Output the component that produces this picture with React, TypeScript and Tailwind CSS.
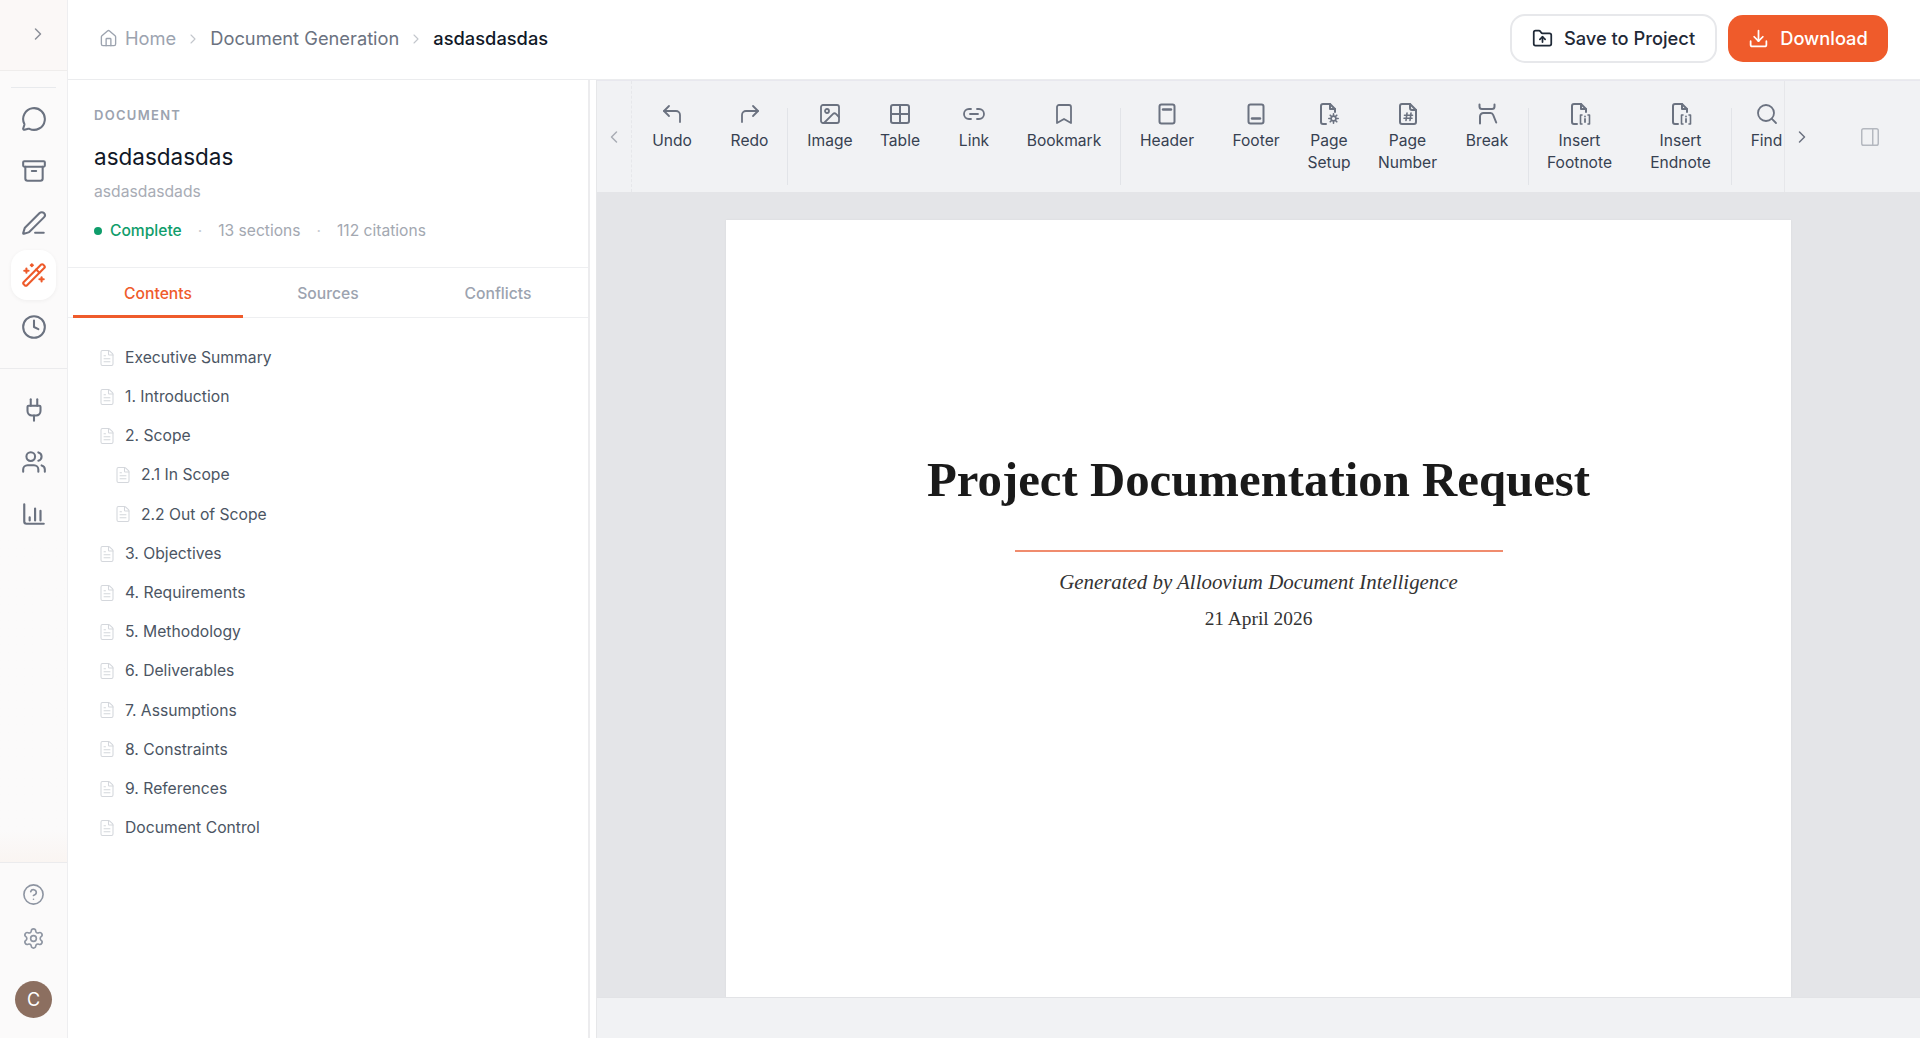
import React from "react";
import {
  ChevronRight, ChevronLeft, Home, MessageCircle, Archive, PenLine, WandSparkles, Clock, Plug, Users,
  CircleHelp, Settings, FolderUp, Download, CornerUpLeft, CornerUpRight, Image, Link2, Bookmark, Search, FileText, PanelRight,
} from "lucide-react";

const base = { fill: "none", stroke: "currentColor", strokeWidth: 2, strokeLinecap: "round", strokeLinejoin: "round" } as const;

function Svg({ children, size = 24 }: { children: React.ReactNode; size?: number }) {
  return <svg width={size} height={size} viewBox="0 0 24 24" {...base}>{children}</svg>;
}
const TableIcon = () => <Svg><rect x="3" y="3" width="18" height="18" rx="2" /><path d="M3 12h18M12 3v18" /></Svg>;
const HeaderIcon = () => <Svg><rect x="4.5" y="2.5" width="15" height="19" rx="2" /><path d="M8 7.5h8" strokeWidth="2.4" /></Svg>;
const FooterIcon = () => <Svg><rect x="4.5" y="2.5" width="15" height="19" rx="2" /><path d="M8 16.5h8" strokeWidth="2.4" /></Svg>;
const PageSetupIcon = () => (
  <Svg>
    <path d="M9 22H6a2 2 0 0 1-2-2V4a2 2 0 0 1 2-2h7l5 5v3" />
    <path d="M13 2v5h5" />
    <circle cx="16.5" cy="16.5" r="2.4" strokeWidth="1.6" />
    <path d="M16.5 11.8v1.6M16.5 19.6v1.6M11.8 16.5h1.6M19.6 16.5h1.6M13.2 13.2l1.1 1.1M18.7 18.7l1.1 1.1M13.2 19.8l1.1-1.1M18.7 14.3l1.1-1.1" strokeWidth="1.6" />
  </Svg>
);
const PageNumberIcon = () => (
  <Svg>
    <path d="M14 2H6a2 2 0 0 0-2 2v16a2 2 0 0 0 2 2h12a2 2 0 0 0 2-2V8z" />
    <path d="M14 2v4a2 2 0 0 0 2 2h4" />
    <path d="M11 11l-1 7.5M15 11l-1 7.5M8.5 13.2h8M8 16.3h8" strokeWidth="1.6" />
  </Svg>
);
const BreakIcon = () => (
  <Svg>
    <path d="M4.5 2.5v2a2.5 2.5 0 0 0 2.5 2.5h10a2.5 2.5 0 0 0 2.5-2.5v-2" />
    <path d="M5 21.5v-7a3.5 3.5 0 0 1 3.5-3.5h7c1.3 0 2.2.7 2.7 2l3 7.5" />
  </Svg>
);
const NoteIcon = () => (
  <Svg>
    <path d="M9 22H6a2 2 0 0 1-2-2V4a2 2 0 0 1 2-2h7l5 5v3" />
    <path d="M13 2v5h5" />
    <path d="M14 13h-1.5v9H14M20 13h1.5v9H20" strokeWidth="1.6" />
    <path d="M17 17v3M17 14.5v.1" strokeWidth="1.8" />
  </Svg>
);
const ChartIcon = () => (
  <Svg size={26}>
    <path d="M3 3v16a2 2 0 0 0 2 2h16" />
    <path d="M8 18v-3M13 18V7M18 18V9" />
  </Svg>
);

function SideItem({ children, active }: { children: React.ReactNode; active?: boolean }) {
  return (
    <div className="h-[52px] flex items-center justify-center">
      <div className={active
        ? "w-[45px] h-[50px] rounded-2xl bg-white shadow-[0_1px_4px_rgba(0,0,0,0.05)] flex items-center justify-center text-[#ee5a2a]"
        : "w-[45px] h-[50px] flex items-center justify-center text-[#6b7280]"}>
        {children}
      </div>
    </div>
  );
}

function Tool({ w, icon, label, line2 }: { w: string; icon: React.ReactNode; label: string; line2?: string }) {
  return (
    <div className={`${w} shrink-0 flex flex-col items-center pt-[21px]`}>
      <div className="h-6 flex items-center justify-center text-[#6b7280]">{icon}</div>
      <div className="mt-[4px] text-[15.6px] leading-[22px] text-[#374151] text-center whitespace-nowrap">
        {label}
        {line2 && <br />}
        {line2}
      </div>
    </div>
  );
}

const Sep = () => <div className="w-px h-[77px] mt-[27px] shrink-0 bg-[#e2e4e8]" />;

const toc: [string, boolean][] = [
  ["Executive Summary", false], ["1. Introduction", false], ["2. Scope", false], ["2.1 In Scope", true], ["2.2 Out of Scope", true],
  ["3. Objectives", false], ["4. Requirements", false], ["5. Methodology", false], ["6. Deliverables", false], ["7. Assumptions", false],
  ["8. Constraints", false], ["9. References", false], ["Document Control", false],
];

export default function App() {
  return (
    <div className="h-screen w-full flex overflow-hidden bg-white [font-family:Inter,sans-serif]">
      <aside className="w-[68px] shrink-0 flex flex-col bg-[#fbfafa] border-r border-[#eeeef0]">
        <div className="h-[71px] shrink-0 flex items-center justify-end pr-[19px] pb-[2px] bg-[#fbf8f7] border-b border-[#efedec] text-[#8b8f98]">
          <ChevronRight size={20} strokeWidth={1.8} />
        </div>
        <div className="mx-[11px] mt-[16px] h-px bg-[#e8eaed]" />
        <div className="mt-[5px]">
          <SideItem><MessageCircle size={26} strokeWidth={1.9} /></SideItem>
          <SideItem><Archive size={26} strokeWidth={1.9} /></SideItem>
          <SideItem><PenLine size={26} strokeWidth={1.9} /></SideItem>
          <SideItem active><WandSparkles size={26} strokeWidth={1.9} /></SideItem>
          <SideItem><Clock size={26} strokeWidth={1.9} /></SideItem>
        </div>
        <div className="mt-[15px] h-px bg-[#ebebed]" />
        <div className="mt-[15px]">
          <SideItem><Plug size={26} strokeWidth={1.9} /></SideItem>
          <SideItem><Users size={26} strokeWidth={1.9} /></SideItem>
          <SideItem><ChartIcon /></SideItem>
        </div>
        <div className="flex-1 bg-gradient-to-b from-[#fbfafa] from-90% to-[#faf5f2]" />
        <div className="h-px bg-[#ebebed]" />
        <div className="h-[175px] shrink-0 flex flex-col items-center text-[#8e95a2]">
          <div className="mt-[19px] h-[24px] flex items-center"><CircleHelp size={23} strokeWidth={1.7} /></div>
          <div className="mt-[20px] h-[24px] flex items-center"><Settings size={23} strokeWidth={1.7} /></div>
          <div className="mt-[31px] w-[37px] h-[37px] rounded-full bg-[#8c6f60] flex items-center justify-center text-white text-[18px]">C</div>
        </div>
      </aside>

      <div className="flex-1 min-w-0 flex flex-col">
        <header className="h-[80px] shrink-0 flex items-center justify-between pl-[31px] pr-[32px] pb-[2px] border-b border-[#ebecee]">
          <nav className="flex items-center text-[18.3px]">
            <Home size={19} strokeWidth={1.7} className="text-[#9ca3af]" />
            <span className="ml-[7px] text-[#9ca3af]">Home</span>
            <ChevronRight size={16} strokeWidth={1.6} className="mx-[9px] text-[#c2c6cc]" />
            <span className="text-[#6b7280]">Document Generation</span>
            <ChevronRight size={16} strokeWidth={1.6} className="mx-[9px] text-[#c2c6cc]" />
            <span className="text-[#111827] font-medium">asdasdasdas</span>
          </nav>
          <div className="flex items-center gap-[11px]">
            <button className="w-[207px] h-[49px] rounded-[15px] border-2 border-[#e7e8eb] bg-white flex items-center justify-center gap-[11px] text-[18.3px] font-medium text-[#1f2937]">
              <FolderUp size={21} strokeWidth={2} />Save to Project
            </button>
            <button className="w-[160px] h-[47px] rounded-[15px] bg-[#ef5b2b] flex items-center justify-center gap-[11px] text-[18.3px] font-medium text-white">
              <Download size={21} strokeWidth={2} />Download
            </button>
          </div>
        </header>

        <div className="flex-1 min-h-0 flex">
          <section className="w-[522px] shrink-0 flex flex-col border-r-2 border-[#ececee]">
            <div className="h-[188px] shrink-0 pl-[26px] border-b border-[#eeeff1]">
              <div className="pt-[27px] text-[13px] leading-4 font-semibold tracking-[0.1em] text-[#9ca3af]">DOCUMENT</div>
              <div className="mt-[19px] text-[22.5px] leading-[30px] text-[#111827]">asdasdasdas</div>
              <div className="mt-[10px] text-[15.7px] leading-5 text-[#a8acb5]">asdasdasdads</div>
              <div className="mt-[19px] flex items-center text-[15.6px] leading-5">
                <span className="w-2 h-2 rounded-full bg-[#0f9d6b]" />
                <span className="ml-[8px] font-medium text-[#0f9d6b]">Complete</span>
                <span className="ml-[16px] text-[#c8ccd2]">·</span>
                <span className="ml-[16px] text-[#a3a8b1]">13 sections</span>
                <span className="ml-[16px] text-[#c8ccd2]">·</span>
                <span className="ml-[16px] text-[#a3a8b1]">112 citations</span>
              </div>
            </div>
            <div className="h-[50px] shrink-0 pl-[5px] flex border-b border-[#eeeff1] text-[15.7px] font-medium">
              <div className="w-[170px] h-[50px] pt-[4px] flex items-center justify-center text-[#ef5b2b] border-b-[3px] border-[#ef5b2b]">Contents</div>
              <div className="w-[170px] pt-[3px] flex items-center justify-center text-[#9ca3af]">Sources</div>
              <div className="w-[170px] pt-[3px] flex items-center justify-center text-[#9ca3af]">Conflicts</div>
            </div>
            <div className="pt-[20px]">
              {toc.map(([t, sub]) => (
                <div key={t} className={sub ? "h-[39.2px] flex items-center pl-[46px]" : "h-[39.2px] flex items-center pl-[30px]"}>
                  <FileText size={18} strokeWidth={1.4} className="text-[#d4d7dc]" />
                  <span className="ml-[9px] text-[15.7px] text-[#4b5563]">{t}</span>
                </div>
              ))}
            </div>
          </section>

          <main className="flex-1 min-w-0 ml-[6px] flex flex-col bg-[#e4e5e8] border-l border-[#e6e7e9]">
            <div className="h-[112px] shrink-0 flex bg-[#f1f2f4] border-t border-[#e8e8ee]">
              <div className="w-[35px] shrink-0 flex items-center justify-center border-r border-dashed border-[#e6e7ea] text-[#a9adb5]">
                <ChevronLeft size={20} strokeWidth={1.8} />
              </div>
              <div className="w-[1152px] shrink-0 overflow-hidden flex">
                <Tool w="w-[80px]" icon={<CornerUpLeft size={24} strokeWidth={1.8} />} label="Undo" />
                <Tool w="w-[75px]" icon={<CornerUpRight size={24} strokeWidth={1.8} />} label="Redo" />
                <Sep />
                <div className="w-[2px] shrink-0" />
                <Tool w="w-[80px]" icon={<Image size={24} strokeWidth={1.8} />} label="Image" />
                <Tool w="w-[60px]" icon={<TableIcon />} label="Table" />
                <Tool w="w-[88px]" icon={<Link2 size={24} strokeWidth={1.8} />} label="Link" />
                <Tool w="w-[92px]" icon={<Bookmark size={24} strokeWidth={1.8} />} label="Bookmark" />
                <div className="w-[10px] shrink-0" />
                <Sep />
                <Tool w="w-[92px]" icon={<HeaderIcon />} label="Header" />
                <Tool w="w-[86px]" icon={<FooterIcon />} label="Footer" />
                <Tool w="w-[60px]" icon={<PageSetupIcon />} label="Page" line2="Setup" />
                <Tool w="w-[97px]" icon={<PageNumberIcon />} label="Page" line2="Number" />
                <Tool w="w-[62px]" icon={<BreakIcon />} label="Break" />
                <div className="w-[10px] shrink-0" />
                <Sep />
                <Tool w="w-[101px]" icon={<NoteIcon />} label="Insert" line2="Footnote" />
                <Tool w="w-[101px]" icon={<NoteIcon />} label="Insert" line2="Endnote" />
                <Sep />
                <Tool w="w-[69px]" icon={<Search size={24} strokeWidth={1.8} />} label="Find" />
              </div>
              <div className="flex-1 flex items-center border-l border-[#e6e7ea] text-[#6b7280]">
                <ChevronRight size={20} strokeWidth={1.8} className="ml-[7px]" />
                <PanelRight size={22} strokeWidth={1.6} className="ml-[47px] text-[#b4b8bf]" />
              </div>
            </div>

            <div className="flex-1 min-h-0 overflow-hidden pt-[28px] flex justify-center">
              <article className="w-[1065px] h-full bg-white flex flex-col items-center shadow-[0_0_2px_rgba(0,0,0,0.06)] [font-family:'Liberation_Serif',serif]">
                <h1 className="mt-[230px] text-[48.8px] leading-[60px] font-bold text-[#1a1a1a] whitespace-nowrap">Project Documentation Request</h1>
                <div className="mt-[40px] w-[488px] h-[2px] bg-[#f08c6e]" />
                <p className="mt-[18px] text-[20.9px] leading-[24px] italic text-[#333333]">Generated by Alloovium Document Intelligence</p>
                <p className="mt-[13px] text-[19.4px] leading-[24px] text-[#333333]">21 April 2026</p>
              </article>
            </div>
            <div className="h-[41px] shrink-0 bg-[#f1f2f4] border-t border-[#e2e3e6]" />
          </main>
        </div>
      </div>
    </div>
  );
}
